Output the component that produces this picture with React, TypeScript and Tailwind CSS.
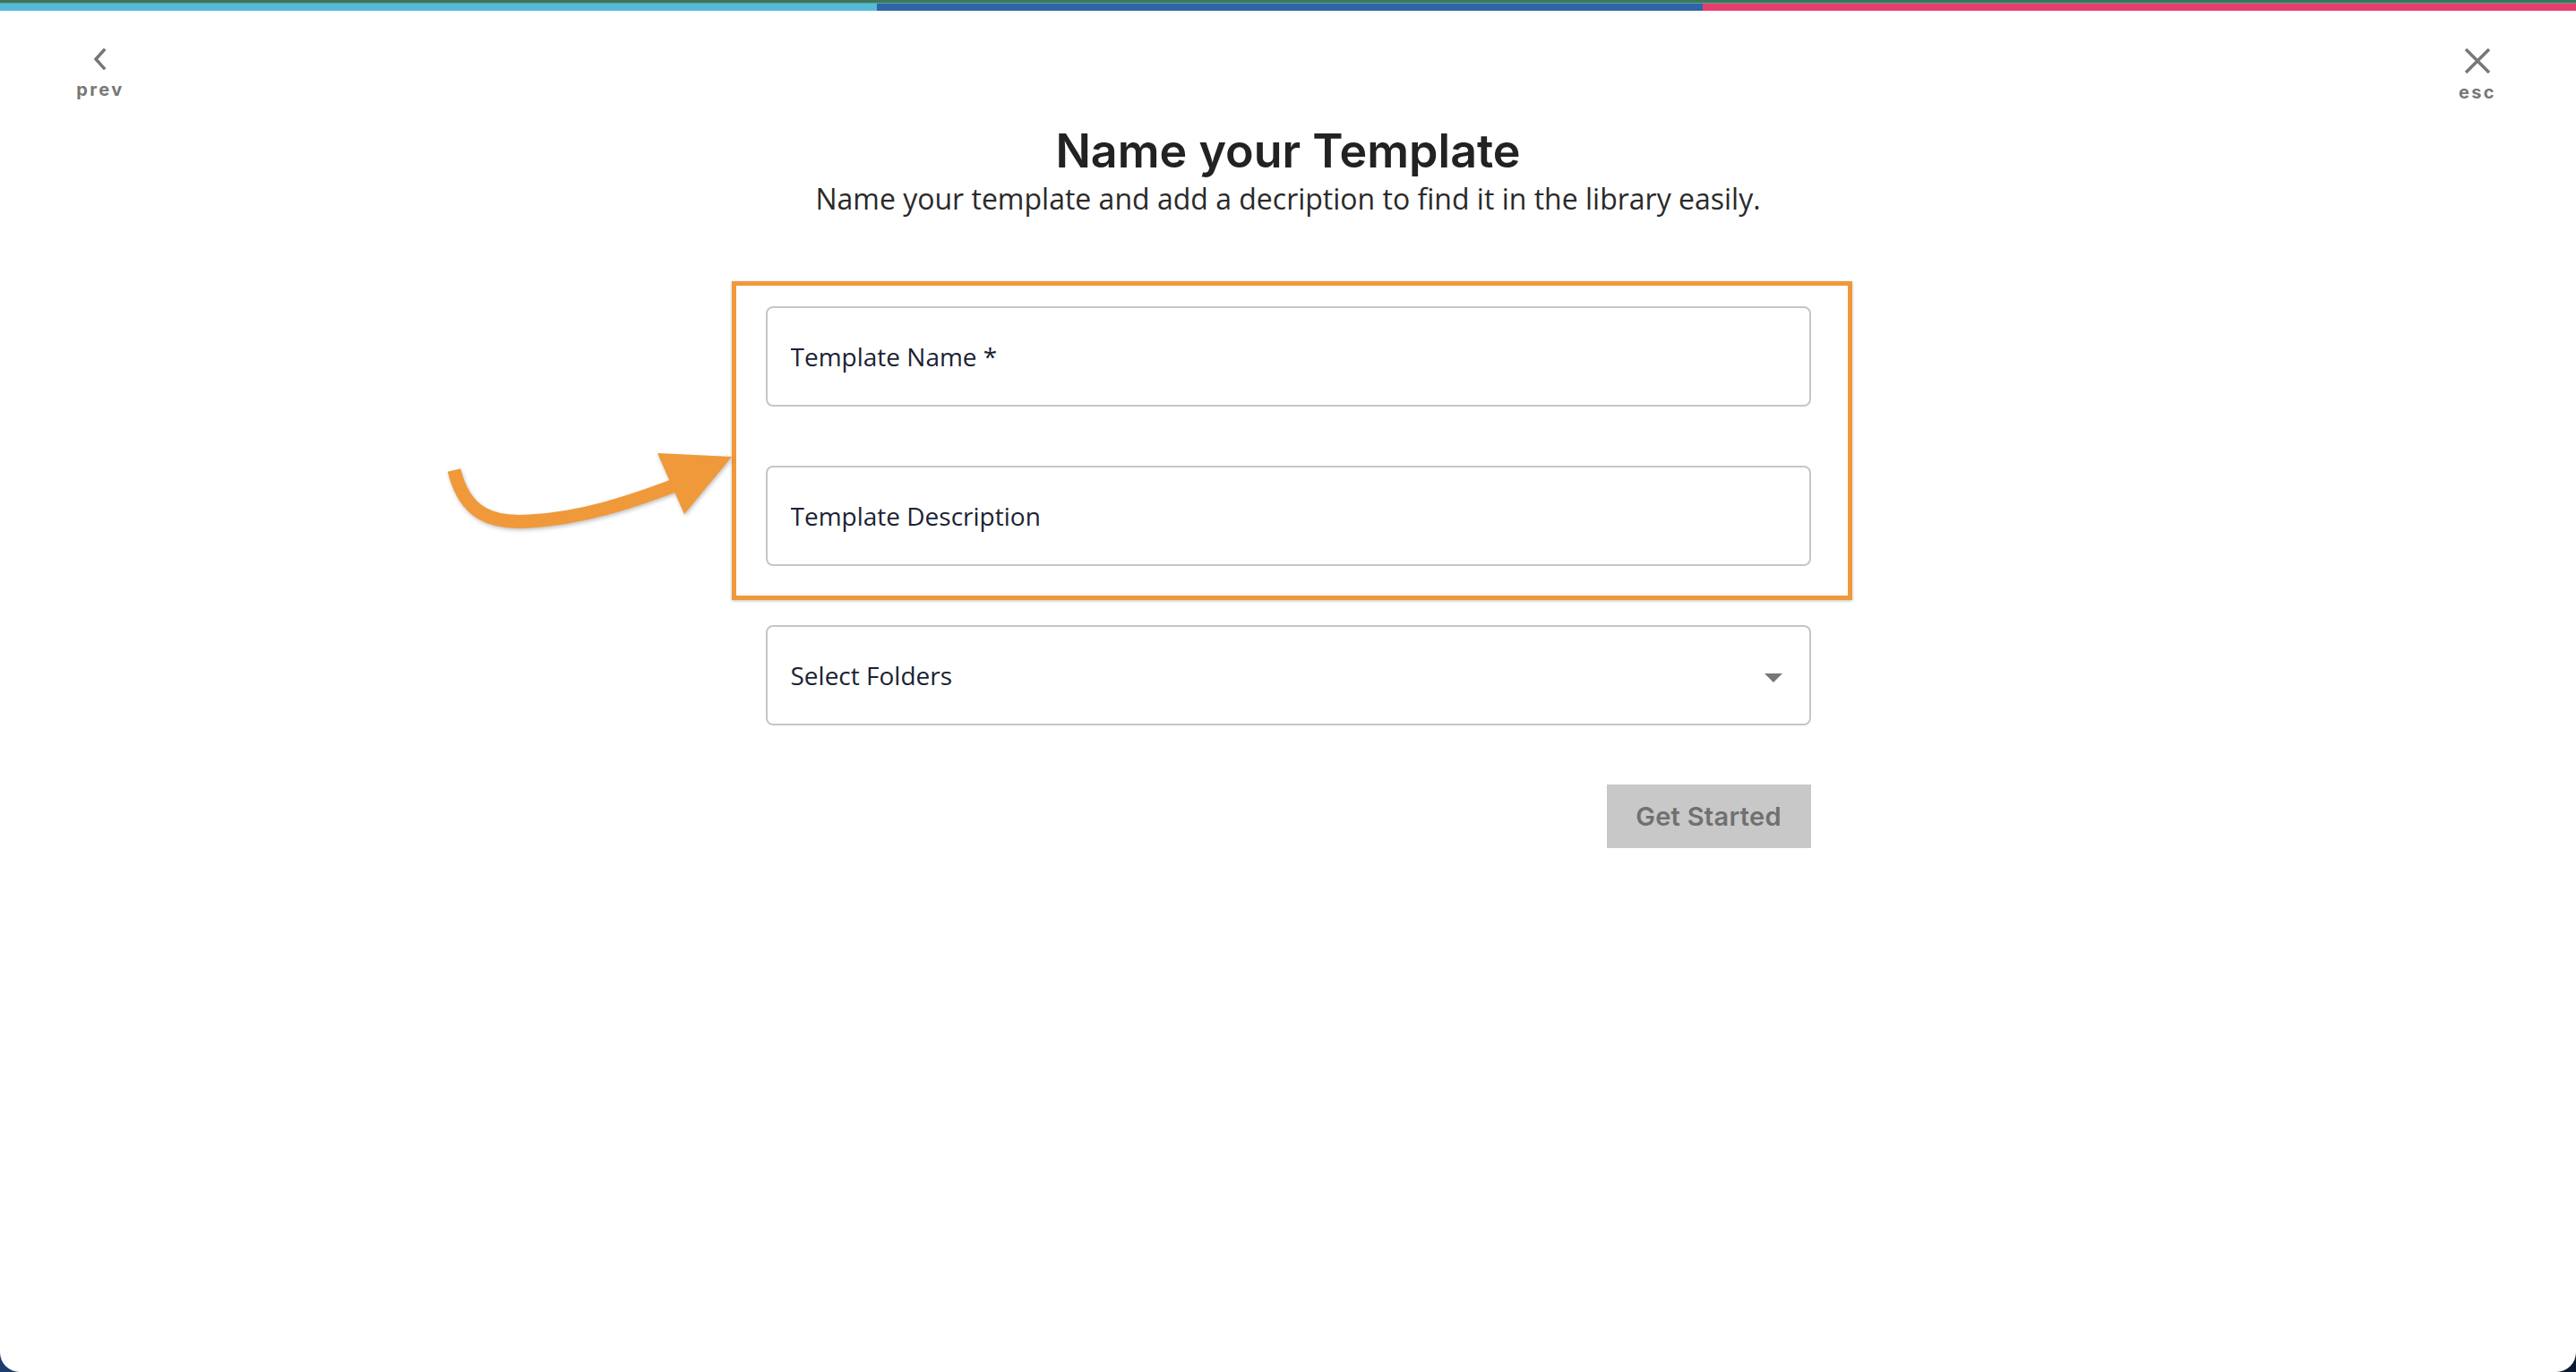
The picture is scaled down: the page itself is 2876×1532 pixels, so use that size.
import { useState } from "react";

const heading = { fontFamily: "Inter, 'Liberation Sans', sans-serif" };
const body = { fontFamily: "'Open Sans', 'Noto Sans', sans-serif" };

function Field(props: { label: string; value: string; onChange: (v: string) => void }) {
  return (
    <label className="flex h-[112px] w-full items-center rounded-[8px] border-2 border-[#c6c6c6] bg-white px-[26px]">
      <input
        value={props.value}
        onChange={(e) => props.onChange(e.target.value)}
        placeholder={props.label}
        className="w-full bg-transparent text-[28px] text-[#1b2333] outline-none placeholder:text-[#1b2333]"
        style={body}
      />
    </label>
  );
}

export default function App() {
  const [name, setName] = useState("");
  const [desc, setDesc] = useState("");

  return (
    <div className="h-[1532px] w-full bg-gradient-to-r from-[#1d3d70] to-[#0c1a30]">
      <div className="flex h-full flex-col overflow-hidden rounded-b-[22px] bg-white">
        {/* progress strip */}
        <div className="h-[3px] bg-[#3b7760]" />
        <div className="h-px bg-[#64a088]" />
        <div className="flex h-[8px]">
          <div className="w-[979px] bg-[#55b9da]" />
          <div className="w-[922px] bg-[#2e65a8]" />
          <div className="flex-1 bg-[#e83e6e]" />
        </div>

        <div className="flex items-start justify-between pl-[86px] pr-[90px] pt-[42px]">
          <button className="flex w-[52px] flex-col items-center text-[#777]">
            <svg width="18" height="24" viewBox="0 0 18 24" fill="none">
              <path d="M13 2 L4 12 L13 22" stroke="#777" strokeWidth="3.5" strokeLinecap="square" />
            </svg>
            <span className="mt-[12px] text-[20px] font-bold leading-none tracking-[0.12em]" style={heading}>
              prev
            </span>
          </button>
          <button className="flex w-[40px] flex-col items-center text-[#777]">
            <svg width="30" height="28" viewBox="0 0 30 28" fill="none">
              <path d="M2 1 L28 27 M28 1 L2 27" stroke="#777" strokeWidth="3.5" />
            </svg>
            <span className="mt-[11px] text-[20px] font-bold leading-none tracking-[0.12em]" style={heading}>
              esc
            </span>
          </button>
        </div>

        <div className="mt-[26px] flex flex-col items-center">
          <h1 className="text-[52px] font-semibold leading-[60px] text-[#222]" style={heading}>
            Name your Template
          </h1>
          <p className="mt-[4px] text-[32px] leading-[38px] text-[#2a2a2a]" style={body}>
            Name your template and add a decription to find it in the library easily.
          </p>
        </div>

        <div className="relative mx-auto mt-[101px] flex w-[1167px] flex-col">
          {/* annotation box around the first two fields */}
          <div className="pointer-events-none absolute -left-[38px] -top-[28px] h-[356px] w-[1251px] border-[5px] border-[#f0993a] shadow-[0_1px_3px_rgba(0,0,0,0.25)]" />
          <svg
            className="pointer-events-none absolute -left-[376px] top-[137px]"
            width="360"
            height="150"
            viewBox="0 0 360 150"
            fill="none"
            style={{ filter: "drop-shadow(1px 2px 2px rgba(0,0,0,0.25))" }}
          >
            <path d="M28 46 C 40 95, 70 106, 112 103 C 170 100, 225 82, 282 60" stroke="#f0993a" strokeWidth="15" />
            <polygon points="255,27 338,31 285,95" fill="#f0993a" />
          </svg>

          <Field label="Template Name *" value={name} onChange={setName} />
          <div className="h-[66px]" />
          <Field label="Template Description" value={desc} onChange={setDesc} />
          <div className="h-[66px]" />
          <button className="flex h-[112px] w-full items-center justify-between rounded-[8px] border-2 border-[#c6c6c6] bg-white pl-[26px] pr-[30px]">
            <span className="text-[28px] text-[#1b2333]" style={body}>
              Select Folders
            </span>
            <svg width="20" height="10" viewBox="0 0 20 10" className="mt-[6px]">
              <polygon points="0,0 20,0 10,10" fill="#777" />
            </svg>
          </button>

          <div className="mt-[66px] flex justify-end">
            <button
              className="h-[71px] w-[228px] bg-[#c8c8c8] text-[29px] font-semibold tracking-[0.01em] text-[#707070]"
              style={heading}
            >
              Get Started
            </button>
          </div>
        </div>
      </div>
    </div>
  );
}
